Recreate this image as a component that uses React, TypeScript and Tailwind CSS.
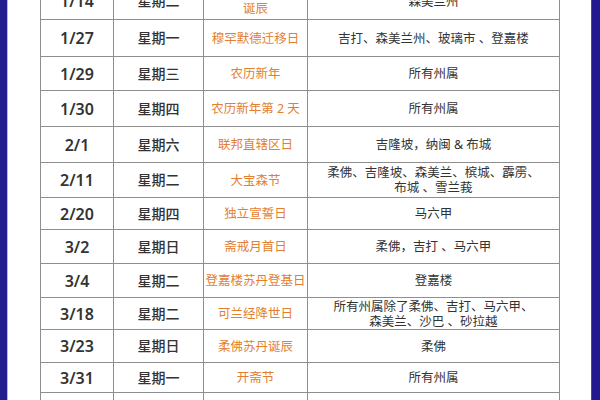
const rows: { date: string; day: string; name: string[]; states: string[]; h: string }[] = [
  { date: '1/14', day: '星期二', name: ['森美兰州元首', '诞辰'], states: ['森美兰州'], h: 'h-[37px]' },
  { date: '1/27', day: '星期一', name: ['穆罕默德迁移日'], states: ['吉打、森美兰州、玻璃市 、登嘉楼'], h: 'h-[37px]' },
  { date: '1/29', day: '星期三', name: ['农历新年'], states: ['所有州属'], h: 'h-[34px]' },
  { date: '1/30', day: '星期四', name: ['农历新年第 2 天'], states: ['所有州属'], h: 'h-[36px]' },
  { date: '2/1', day: '星期六', name: ['联邦直辖区日'], states: ['吉隆坡，纳闽 & 布城'], h: 'h-[36px]' },
  { date: '2/11', day: '星期二', name: ['大宝森节'], states: ['柔佛、吉隆坡、森美兰、槟城、霹雳、', '布城 、雪兰莪'], h: 'h-[35px]' },
  { date: '2/20', day: '星期四', name: ['独立宣誓日'], states: ['马六甲'], h: 'h-[32px]' },
  { date: '3/2', day: '星期日', name: ['斋戒月首日'], states: ['柔佛，吉打 、马六甲'], h: 'h-[34px]' },
  { date: '3/4', day: '星期二', name: ['登嘉楼苏丹登基日'], states: ['登嘉楼'], h: 'h-[34px]' },
  { date: '3/18', day: '星期二', name: ['可兰经降世日'], states: ['所有州属除了柔佛、吉打、马六甲、', '森美兰、沙巴 、砂拉越'], h: 'h-[32px]' },
  { date: '3/23', day: '星期日', name: ['柔佛苏丹诞辰'], states: ['柔佛'], h: 'h-[33px]' },
  { date: '3/31', day: '星期一', name: ['开斋节'], states: ['所有州属'], h: 'h-[30px]' },
  { date: '4/1', day: '星期二', name: ['开斋节第二天'], states: ['所有州属'], h: 'h-[36px]' },
];

export default function App() {
  return (
    <div
      className="flex h-[400px] w-[600px] overflow-hidden bg-white"
      style={{ fontFamily: '"Noto Sans", "Noto Sans CJK SC", sans-serif' }}
    >
      <div className="w-[8px] shrink-0 bg-[#231c8e] border-r border-[#b9b6e6]" />

      <div className="flex-1 pl-[32px] pr-[31px]">
        <table className="-mt-[18px] w-[519px] table-fixed border-collapse border border-[#8e8e8e]">
          <colgroup>
            <col className="w-[73px]" />
            <col className="w-[90px]" />
            <col className="w-[104px]" />
            <col className="w-[252px]" />
          </colgroup>
          <tbody>
            {rows.map((r) => (
              <tr key={r.date} className={r.h}>
                <td className="border border-[#8e8e8e] p-0 text-center text-[16px] font-semibold leading-none text-[#333333]">
                  {r.date}
                </td>
                <td className="border border-[#8e8e8e] p-0 text-center text-[14px] font-medium leading-none text-[#333333]">
                  {r.day}
                </td>
                <td className="border border-[#8e8e8e] p-0 text-center text-[12.5px] leading-[15px] text-[#e2802f] whitespace-nowrap overflow-hidden">
                  {r.name.map((n) => (
                    <div key={n}>{n}</div>
                  ))}
                </td>
                <td className="border border-[#8e8e8e] p-0 text-center text-[12.5px] leading-[15px] text-[#333333] whitespace-nowrap">
                  {r.states.map((s) => (
                    <div key={s}>{s}</div>
                  ))}
                </td>
              </tr>
            ))}
          </tbody>
        </table>
      </div>

      <div className="w-[10px] shrink-0 bg-[#221a8c] border-l border-[#4a44a8]" />
    </div>
  );
}
